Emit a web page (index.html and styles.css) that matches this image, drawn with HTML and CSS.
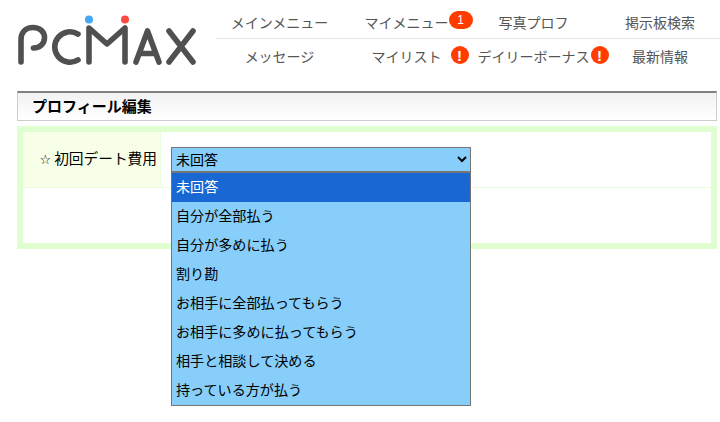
FILE: index.html
```html
<!DOCTYPE html>
<html lang="ja">
<head>
<meta charset="utf-8">
<title>プロフィール編集</title>
<link rel="stylesheet" href="styles.css">
</head>
<body>
<header class="header">
  <a class="logo" href="#" aria-label="PCMAX">
    <svg width="180" height="56" viewBox="0 0 180 56" fill="none" stroke="#505050" stroke-width="5.6" stroke-linecap="round" stroke-linejoin="round">
      <path d="M4 47V25C4 17 9 12.500 16 12.500C23 12.500 27.500 17 27.500 22.500C27.500 28.500 23 33 16.500 33"/>
      <path d="M61 19.100A15.200 15.200 0 1 0 61 44.900"/>
      <path d="M72 47V13L90 29L108 13V47"/>
      <path d="M119 47L130.500 16L142 47M123 38.500H138"/>
      <path d="M152 16L176 47M176 16L152 47"/>
      <circle cx="72" cy="4.500" r="4" fill="#45a8f5" stroke="none"/>
      <circle cx="108" cy="4.500" r="4" fill="#fb4a40" stroke="none"/>
    </svg>
  </a>
  <nav class="nav">
    <a class="nav-item" href="#">メインメニュー</a>
    <a class="nav-item" href="#"><span class="nav-label">マイメニュー<span class="badge badge-count">1</span></span></a>
    <a class="nav-item" href="#">写真プロフ</a>
    <a class="nav-item nav-last" href="#">掲示板検索</a>
    <a class="nav-item" href="#">メッセージ</a>
    <a class="nav-item" href="#"><span class="nav-label">マイリスト<span class="badge badge-alert badge-list">!</span></span></a>
    <a class="nav-item" href="#"><span class="nav-label">デイリーボーナス<span class="badge badge-alert badge-daily">!</span></span></a>
    <a class="nav-item nav-last" href="#">最新情報</a>
  </nav>
</header>
<main class="main">
  <h1 class="title">プロフィール編集</h1>
  <div class="panel">
    <div class="row row-first">
      <div class="label"><span class="star">☆</span>初回デート費用</div>
      <div class="field">
        <div class="select-wrap">
          <select class="select" aria-label="初回デート費用"><option>未回答</option></select>
          <ul class="options">
            <li class="option option-active">未回答</li>
            <li class="option">自分が全部払う</li>
            <li class="option">自分が多めに払う</li>
            <li class="option">割り勘</li>
            <li class="option">お相手に全部払ってもらう</li>
            <li class="option">お相手に多めに払ってもらう</li>
            <li class="option">相手と相談して決める</li>
            <li class="option">持っている方が払う</li>
          </ul>
        </div>
      </div>
    </div>
    <div class="row row-empty"></div>
  </div>
</main>
</body>
</html>
```
FILE: styles.css
```css
* { box-sizing: border-box; }
html, body { margin: 0; padding: 0; }
body {
  width: 720px;
  height: 422px;
  overflow: hidden;
  background: #fff;
  color: #000;
  font-family: "Noto Sans CJK JP", "Noto Sans", sans-serif;
  font-size: 14px;
}
a { color: inherit; text-decoration: none; }
.header {
  display: flex;
  height: 91px;
  padding-left: 17px;
}
.logo {
  display: block;
  width: 180px;
  height: 56px;
  margin-top: 15px;
  margin-right: 19px;
  flex: none;
}
.logo svg { display: block; }
.nav {
  flex: 1;
  display: grid;
  grid-template-columns: 127px 127px 127px 1fr;
  grid-template-rows: 39px 38px;
  align-self: flex-start;
}
.nav-item {
  display: flex;
  align-items: center;
  justify-content: center;
  color: #555;
  font-size: 14px;
  line-height: 1;
}
.nav-item:nth-child(-n+4) {
  border-bottom: 1px solid #e3e3e3;
  padding-top: 5px;
}
.nav-item:nth-child(n+5) { padding-bottom: 4px; }
.nav-last { padding-left: 3px; }
.nav-label { position: relative; white-space: nowrap; }
.badge {
  position: absolute;
  display: flex;
  align-items: center;
  justify-content: center;
  background: #ff3d00;
  color: #fff;
  font-family: "Liberation Sans", sans-serif;
}
.badge-count {
  left: 100%;
  top: -4px;
  margin-left: 0;
  width: 24px;
  height: 18px;
  border-radius: 9px;
  font-size: 12px;
}
.badge-alert {
  top: -3px;
  width: 18px;
  height: 18px;
  border-radius: 50%;
  font-size: 15px;
  font-weight: bold;
}
.badge-list { left: 100%; margin-left: 9px; }
.badge-daily { left: 100%; margin-left: 1px; }
.main { padding: 0 3px 0 17px; }
.title {
  margin: 0;
  height: 30px;
  padding-left: 14px;
  border: 1px solid #ccc;
  border-top: 2px solid #808080;
  background: linear-gradient(#f2f2f2, #fff);
  font-size: 15px;
  font-weight: bold;
  line-height: 25px;
}
.panel {
  margin-top: 5px;
  border: 6px solid #e0ffd0;
  background: #fff;
}
.row { display: flex; height: 55px; }
.row-first { border-bottom: 1px solid #e8ffd8; height: 56px; }
.label {
  width: 138px;
  padding-right: 3px;
  border-right: 1px solid #eaffe0;
  background: #f8ffe8;
  text-align: right;
  line-height: 51px;
  font-size: 14.7px;
}
.star {
  margin-right: 3px;
  font-family: "DejaVu Sans", sans-serif;
  font-size: 13px;
}
.field { flex: 1; padding: 15px 0 0 10px; }
.select-wrap { position: relative; width: 300px; }
.select {
  display: block;
  width: 300px;
  height: 25px;
  margin: 0;
  padding: 0 0 2px;
  border: 1px solid #767676;
  border-radius: 0;
  background-color: #87cefa;
  color: #000;
  font-family: inherit;
  font-size: 14px;
}
.options {
  position: absolute;
  top: 25px;
  left: 0;
  width: 300px;
  margin: 0;
  padding: 0;
  list-style: none;
  border: 1px solid #767676;
  background: #87cefa;
  z-index: 2;
}
.option {
  height: 29px;
  padding-left: 4px;
  line-height: 26px;
  font-size: 14.1px;
}
.option-active { background: #1967d2; color: #fff; }
```
